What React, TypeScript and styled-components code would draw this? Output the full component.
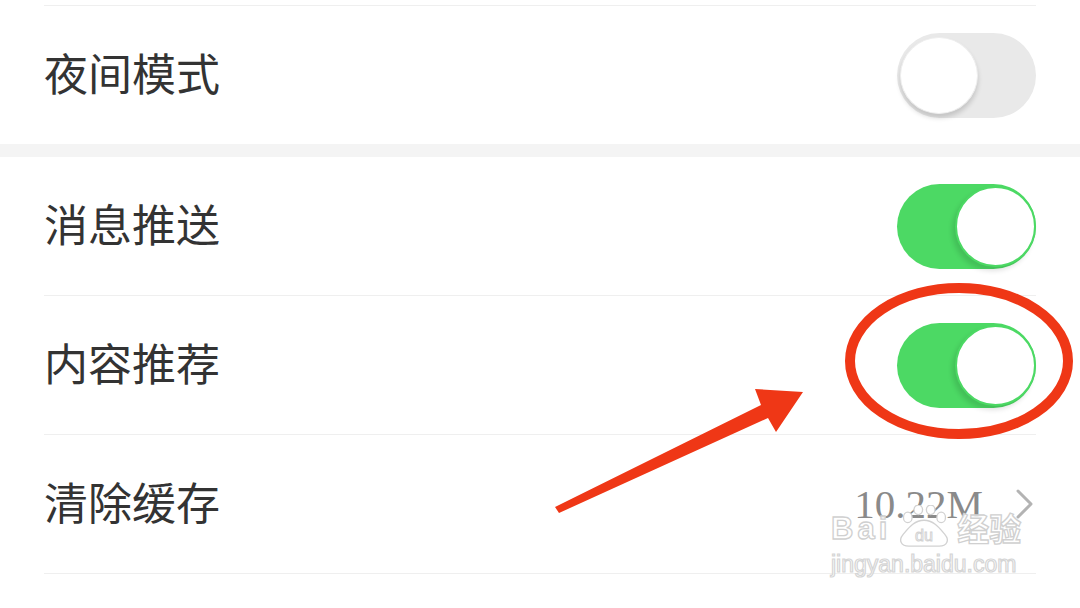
import React from 'react';
import styled, { createGlobalStyle } from 'styled-components';

const GlobalStyle = createGlobalStyle`
  html, body {
    margin: 0;
    padding: 0;
    background: #ffffff;
  }
`;

type Item =
  | { label: string; kind: 'switch'; on: boolean }
  | { label: string; kind: 'value'; value: string };

const groups: Item[][] = [
  [{ label: '夜间模式', kind: 'switch', on: false }],
  [
    { label: '消息推送', kind: 'switch', on: true },
    { label: '内容推荐', kind: 'switch', on: true },
    { label: '清除缓存', kind: 'value', value: '10.22M' },
  ],
];

function Switch({ on }: { on: boolean }) {
  return (
    <Track $on={on}>
      <Knob $on={on} />
    </Track>
  );
}

function Chevron() {
  return (
    <svg width="18" height="30" viewBox="0 0 18 30">
      <path d="M2 2 L15 15 L2 28" fill="none" stroke="#b3b3b3" strokeWidth="3" strokeLinecap="round" strokeLinejoin="round" />
    </svg>
  );
}

function Annotation() {
  return (
    <Overlay width="1080" height="608" viewBox="0 0 1080 608">
      <ellipse cx="959" cy="361" rx="109" ry="73" fill="none" stroke="#ef3716" strokeWidth="10" />
      <polygon
        points="555,507 761,405 755,389 803,392 776,432 768,418 559,513"
        fill="#ef3716"
      />
    </Overlay>
  );
}

function Watermark() {
  return (
    <Mark>
      <MarkTop>
        <MarkBai>Bai</MarkBai>
        <svg width="56" height="42" viewBox="0 0 56 44">
          <g fill="#ffffff" stroke="#d2d2d2" strokeWidth="1.4">
            <ellipse cx="11" cy="13" rx="4.5" ry="5.5" />
            <ellipse cx="22" cy="5" rx="4.5" ry="5" />
            <ellipse cx="35" cy="5" rx="4.5" ry="5" />
            <ellipse cx="46" cy="13" rx="4.5" ry="5.5" />
            <path d="M28 16 C38 16 44 24 50 31 C55 37 52 43 44 43 L12 43 C4 43 1 37 6 31 C12 24 18 16 28 16 Z" />
          </g>
          <text x="28" y="38" textAnchor="middle" fontFamily="'Liberation Sans', Arial, sans-serif" fontSize="17" fill="#ffffff" stroke="#d2d2d2" strokeWidth="1">du</text>
        </svg>
        <MarkCjk>经验</MarkCjk>
      </MarkTop>
      <MarkUrl>jingyan.baidu.com</MarkUrl>
    </Mark>
  );
}

export default function App() {
  return (
    <>
      <GlobalStyle />
      <Page>
        {groups.map((group, gi) => (
          <Group key={gi} $first={gi === 0}>
            {group.map((item) => (
              <Row key={item.label} $top={gi === 0}>
                <Label>{item.label}</Label>
                {item.kind === 'switch' ? (
                  <Switch on={item.on} />
                ) : (
                  <Detail>
                    <Value>{item.value}</Value>
                    <Chevron />
                  </Detail>
                )}
              </Row>
            ))}
          </Group>
        ))}
        <Annotation />
        <Watermark />
      </Page>
    </>
  );
}

const Page = styled.div`
  position: relative;
  width: 1080px;
  height: 608px;
  overflow: hidden;
  background: #f4f4f4;
  display: flex;
  flex-direction: column;
  gap: 13px;
`;

const Group = styled.div<{ $first: boolean }>`
  background: #ffffff;
  padding-top: ${(p) => (p.$first ? '5px' : '0')};
  flex: ${(p) => (p.$first ? '0 0 auto' : '1 1 auto')};
`;

const Row = styled.div<{ $top: boolean }>`
  margin: 0 44px;
  height: 138px;
  display: flex;
  align-items: center;
  justify-content: space-between;
  border-top: ${(p) => (p.$top ? '1px solid #efefef' : 'none')};
  border-bottom: ${(p) => (p.$top ? 'none' : '1px solid #efefef')};
`;

const Label = styled.span`
  font-family: 'Noto Sans CJK SC', 'Noto Sans', sans-serif;
  font-size: 44px;
  line-height: 1;
  margin-bottom: 6px;
  color: #333333;
`;

const Track = styled.div<{ $on: boolean }>`
  position: relative;
  width: 139px;
  height: 85px;
  border-radius: 43px;
  background: ${(p) => (p.$on ? '#4cd964' : '#e9e9e9')};
`;

const Knob = styled.div<{ $on: boolean }>`
  position: absolute;
  box-sizing: border-box;
  top: ${(p) => (p.$on ? '2px' : '4px')};
  left: ${(p) => (p.$on ? '58px' : '3px')};
  width: ${(p) => (p.$on ? '81px' : '78px')};
  height: ${(p) => (p.$on ? '81px' : '77px')};
  border-radius: 50%;
  background: #ffffff;
  border: ${(p) => (p.$on ? '2px solid #4cd964' : '1px solid #eeeeee')};
  box-shadow: ${(p) =>
    p.$on ? '-3px 4px 5px rgba(0, 0, 0, 0.12)' : '0 4px 5px rgba(0, 0, 0, 0.16)'};
`;

const Detail = styled.div`
  display: flex;
  align-items: center;
  gap: 33px;
  padding-right: 2px;
`;

const Value = styled.span`
  font-family: 'Liberation Serif', 'Times New Roman', serif;
  font-size: 41px;
  color: #8a8a8a;
`;

const Overlay = styled.svg`
  position: absolute;
  left: 0;
  top: 0;
  pointer-events: none;
`;

const Mark = styled.div`
  position: absolute;
  left: 831px;
  top: 505px;
  display: flex;
  flex-direction: column;
  align-items: flex-start;
  pointer-events: none;
`;

const MarkTop = styled.div`
  display: flex;
  align-items: flex-end;
  gap: 5px;
`;

const MarkBai = styled.span`
  font-family: 'Liberation Sans', Arial, sans-serif;
  font-weight: 700;
  font-size: 31px;
  line-height: 36px;
  letter-spacing: 4px;
  color: rgba(255, 255, 255, 0.85);
  -webkit-text-stroke: 1.3px #d0d0d0;
`;

const MarkCjk = styled.span`
  font-family: 'Noto Sans CJK SC', sans-serif;
  font-weight: 700;
  font-size: 32px;
  line-height: 40px;
  color: rgba(255, 255, 255, 0.85);
  -webkit-text-stroke: 1.3px #d0d0d0;
`;

const MarkUrl = styled.span`
  margin-top: 7px;
  font-family: 'Liberation Sans', Arial, sans-serif;
  font-size: 23px;
  line-height: 20px;
  color: rgba(255, 255, 255, 0.85);
  -webkit-text-stroke: 1.2px #d5d5d5;
`;
